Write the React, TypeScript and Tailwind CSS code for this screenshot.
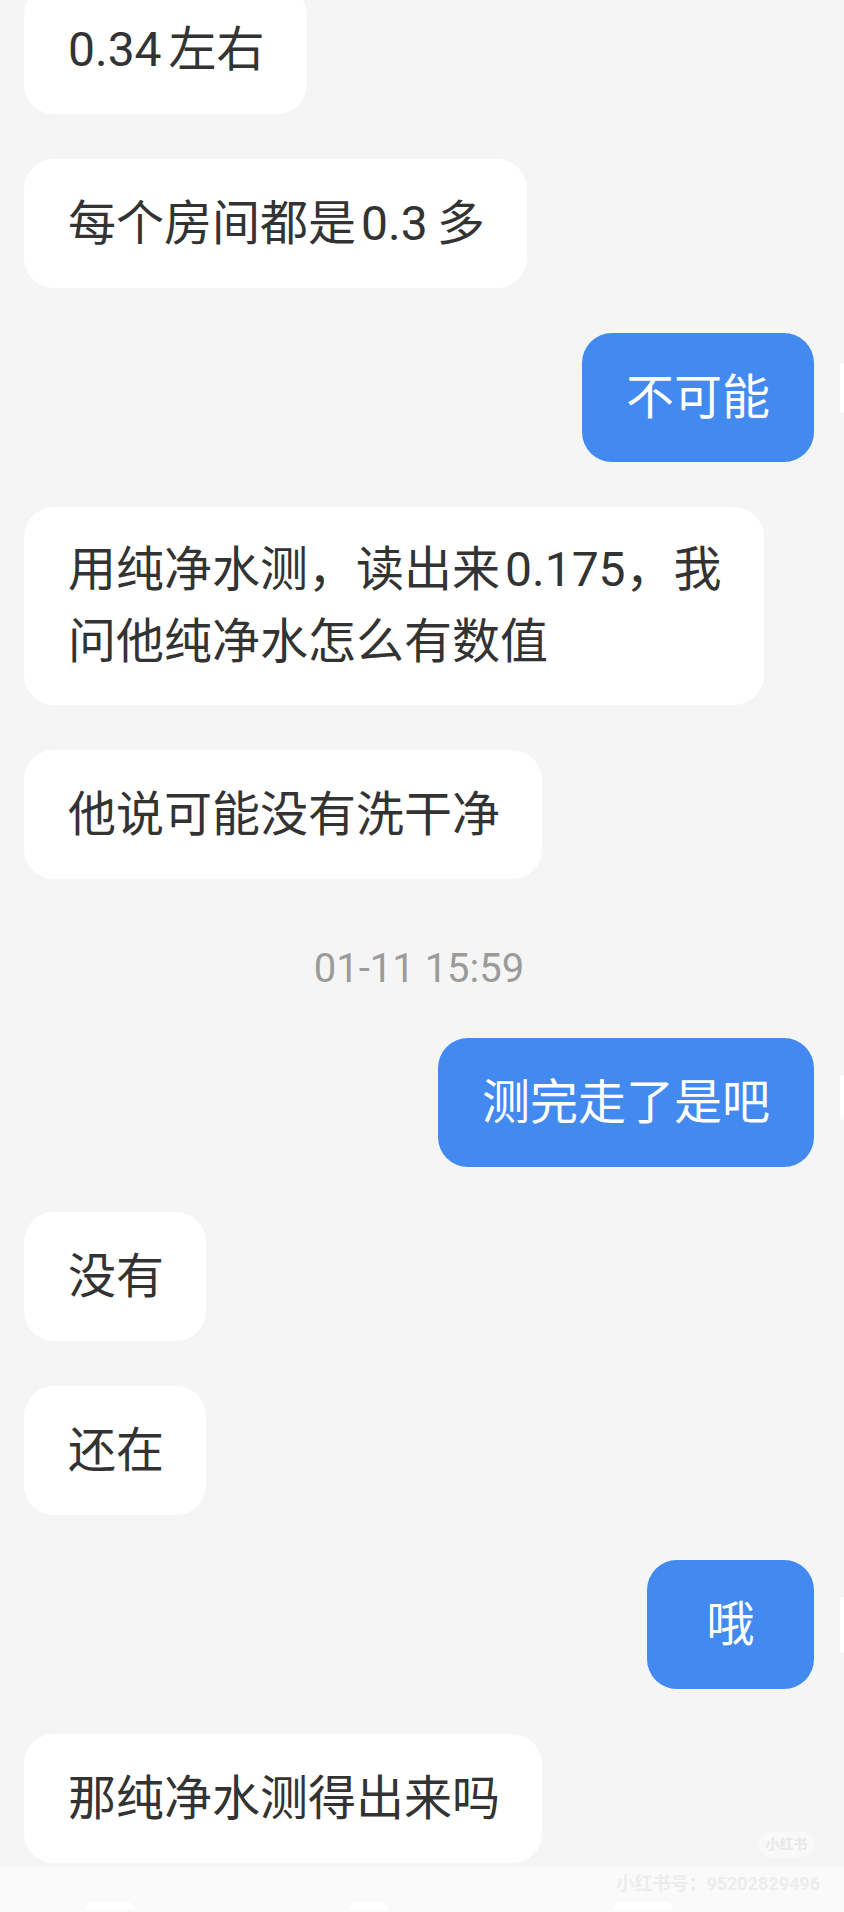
import React from "react";

type Msg =
  | { kind: "in"; text: React.ReactNode; pad?: string }
  | { kind: "out"; text: string; stub: string }
  | { kind: "time"; text: string };

const messages: Msg[] = [
  { kind: "in", text: <><span className="mr-[7px]">0.34</span>左右</> },
  { kind: "in", text: <>每个房间都是<span className="ml-[5px] mr-[9px]">0.3</span>多</> },
  { kind: "out", text: "不可能", stub: "mt-[30px] h-[50px]" },
  {
    kind: "in",
    text: (
      <>
        <span className="block">
          用纯净水测，读出来<span className="ml-[5px]">0.175</span>，我
        </span>
        <span className="block">问他纯净水怎么有数值</span>
      </>
    ),
    pad: "py-[27px]",
  },
  { kind: "in", text: "他说可能没有洗干净" },
  { kind: "time", text: "01-11 15:59" },
  { kind: "out", text: "测完走了是吧", stub: "mt-[37px] h-[45px]" },
  { kind: "in", text: "没有" },
  { kind: "in", text: "还在" },
  { kind: "out", text: "哦", stub: "mt-[37px] h-[56px]" },
  { kind: "in", text: "那纯净水测得出来吗" },
];

const font = "font-['Roboto','Noto_Sans_CJK_SC',sans-serif]";

function Bubble({ msg }: { msg: Msg }) {
  if (msg.kind === "time") {
    return (
      <div className={`h-[90px] pr-[30px] flex items-center justify-center text-[40px] leading-[40px] text-[#9b9b9b] ${font}`}>
        {msg.text}
      </div>
    );
  }
  if (msg.kind === "out") {
    return (
      <div className="flex justify-end items-start">
        <div className="min-w-[167px] text-center rounded-[30px] bg-[#428af0] text-white px-[44px] py-[28.5px] text-[48px] leading-[72px]">
          {msg.text}
        </div>
        <div className="w-[26px] shrink-0" />
        <div className={`w-[4px] shrink-0 bg-white rounded-l-[4px] ${msg.stub}`} />
      </div>
    );
  }
  return (
    <div className="flex justify-start">
      <div
        className={`min-w-[167px] rounded-[30px] bg-white text-[#333333] pl-[44px] pr-[42px] text-[48px] leading-[72px] whitespace-nowrap ${
          msg.pad ?? "py-[28.5px]"
        }`}
      >
        {msg.text}
      </div>
    </div>
  );
}

export default function App() {
  return (
    <div className={`relative w-[844px] h-[1912px] overflow-hidden bg-[#f5f5f5] ${font}`}>
      <div className="flex flex-col pl-[24px]">
        {messages.map((m, i) => {
          const prev = messages[i - 1];
          let mt = "mt-[45px]";
          if (i === 0) mt = "-mt-[15px]";
          else if (prev && prev.kind === "time") mt = "mt-[24px]";
          return (
            <div key={i} className={mt}>
              <Bubble msg={m} />
            </div>
          );
        })}
      </div>

      {/* bottom bar with watermark */}
      <div className="mt-[4px] h-[45px] bg-[#fafafa] flex flex-col">
        <div className="pt-[8px] pr-[24px] flex justify-end text-[18px] leading-[18px] font-bold text-[#ededed]">
          小红书号：95202829496
        </div>
        <div className="mt-[9px] flex">
          <div className="ml-[86px] w-[49px] h-[8px] bg-white rounded-t-full" />
          <div className="ml-[215px] w-[38px] h-[8px] bg-white rounded-t-full" />
          <div className="ml-[226px] w-[59px] h-[8px] bg-white rounded-t-full" />
        </div>
      </div>

      <div className="absolute top-[1832px] right-[29px] w-[57px] h-[25px] rounded-full bg-[#f9f9f9] flex items-center justify-center text-[14px] font-bold text-[#e8e8e8]">
        小红书
      </div>
    </div>
  );
}
